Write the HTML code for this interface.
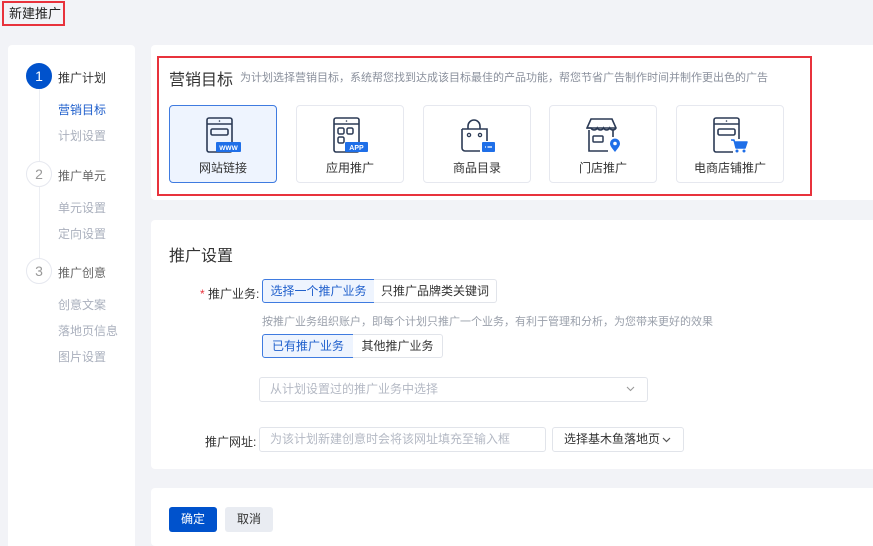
<!DOCTYPE html>
<html><head><meta charset="utf-8"><style>
*{box-sizing:border-box;margin:0;padding:0}
body{width:873px;height:546px;overflow:hidden;background:#f2f3f7;font-family:"Liberation Sans","Noto Sans CJK SC",sans-serif;position:relative;color:#333;font-size:12px}
.abs{position:absolute}
.title{left:2px;top:1px;width:63px;height:25px;border:2px solid #e8323c;font-size:13px;line-height:21px;padding-left:5px;color:#222}
.side{left:8px;top:45px;width:127px;height:501px;background:#fff;border-radius:4px 4px 0 0}
.step{position:absolute;left:18px;width:26px;height:26px;border-radius:50%;border:1px solid #e6e8ef;color:#999;text-align:center;line-height:24px;font-size:14px;background:#fff}
.step.on{background:#0052cc;border-color:#0052cc;color:#fff}
.sl{position:absolute;left:50px;font-size:12px;color:#333}
.si{position:absolute;left:50px;font-size:12px;color:#aab0bd}
.vline{position:absolute;left:31px;width:1px;background:#eceef3}
.card{left:151px;width:722px;background:#fff;border-radius:4px 0 0 4px}
.red{left:157px;top:56px;width:655px;height:140px;border:2px solid #e8323c}
.h1{font-size:16px;color:#333}
.opt{position:absolute;top:105px;width:108px;height:78px;border:1px solid #e6e8ef;border-radius:4px;background:#fff;text-align:center}
.opt.on{border-color:#3f7be0;background:#eef4fe}
.opt svg{position:absolute;left:36px;top:11px}
.opt span{position:absolute;left:0;right:0;top:53px;font-size:12px;color:#333}
.btn{position:absolute;height:24px;border:1px solid #e1e4ea;font-size:12px;line-height:22px;text-align:center;color:#333;background:#fff}
.btn.on{border-color:#3f7be0;background:#eef4fe;color:#1f5fcc}
.inp{position:absolute;height:25px;border:1px solid #e1e4ea;border-radius:3px;font-size:12px;line-height:23px;padding-left:10px;color:#b4b9c4}
.chev{position:absolute;top:8px}
</style></head><body>
<div class="abs title">新建推广</div>

<div class="abs side">
  <div class="vline" style="top:44px;height:80px"></div>
  <div class="vline" style="top:142px;height:80px"></div>
  <div class="step on" style="top:18px">1</div>
  <div class="sl" style="top:24px">推广计划</div>
  <div class="si" style="top:56px;color:#1f5fcc">营销目标</div>
  <div class="si" style="top:82px">计划设置</div>
  <div class="step" style="top:116px">2</div>
  <div class="sl" style="top:122px;color:#666">推广单元</div>
  <div class="si" style="top:154px">单元设置</div>
  <div class="si" style="top:180px">定向设置</div>
  <div class="step" style="top:213px">3</div>
  <div class="sl" style="top:219px;color:#666">推广创意</div>
  <div class="si" style="top:251px">创意文案</div>
  <div class="si" style="top:277px">落地页信息</div>
  <div class="si" style="top:303px">图片设置</div>
</div>

<div class="abs card" style="top:45px;height:155px"></div>
<div class="abs red"></div>
<div class="abs h1" style="left:169px;top:66px">营销目标</div>
<div class="abs" style="left:240px;top:69px;font-size:11px;color:#8a909c">为计划选择营销目标，系统帮您找到达成该目标最佳的产品功能，帮您节省广告制作时间并制作更出色的广告</div>

<div class="opt on" style="left:169px"><svg width="36" height="36" viewBox="0 0 36 36"><rect x="1" y="1" width="25" height="34" rx="2" fill="none" stroke="#2b3a55" stroke-width="1.6"/><line x1="1" y1="7" x2="26" y2="7" stroke="#2b3a55" stroke-width="1.4"/><circle cx="13.5" cy="4" r=".8" fill="#2b3a55"/><rect x="5" y="12" width="17" height="6" rx="1.5" fill="none" stroke="#2b3a55" stroke-width="1.6"/><rect x="10" y="25" width="25" height="10" rx="1" fill="#1f6fe8"/><text x="22.5" y="33" font-size="6.5" font-weight="bold" fill="#fff" text-anchor="middle" font-family="Liberation Sans">WWW</text></svg><span>网站链接</span></div>
<div class="opt" style="left:296px"><svg width="36" height="36" viewBox="0 0 36 36"><rect x="1" y="1" width="25" height="34" rx="2" fill="none" stroke="#2b3a55" stroke-width="1.6"/><line x1="1" y1="7" x2="26" y2="7" stroke="#2b3a55" stroke-width="1.4"/><circle cx="13.5" cy="4" r=".8" fill="#2b3a55"/><rect x="5" y="11" width="6" height="6" rx="1.5" fill="none" stroke="#2b3a55" stroke-width="1.5"/><rect x="14" y="11" width="6" height="6" rx="1.5" fill="none" stroke="#2b3a55" stroke-width="1.5"/><rect x="5" y="20" width="6" height="6" rx="1.5" fill="none" stroke="#2b3a55" stroke-width="1.5"/><rect x="12" y="25" width="23" height="10" rx="1" fill="#1f6fe8"/><text x="23.5" y="33" font-size="7" font-weight="bold" fill="#fff" text-anchor="middle" font-family="Liberation Sans">APP</text></svg><span>应用推广</span></div>
<div class="opt" style="left:423px"><svg width="36" height="36" viewBox="0 0 36 36"><path d="M8 12 V9 a6 6 0 0 1 12 0 V12" fill="none" stroke="#2b3a55" stroke-width="1.6"/><path d="M2 12 H27 V24 M20 34 H5 a3 3 0 0 1 -3 -3 V12" fill="none" stroke="#2b3a55" stroke-width="1.6"/><circle cx="9" cy="18" r="1.6" fill="none" stroke="#2b3a55" stroke-width="1.3"/><circle cx="20" cy="18" r="1.6" fill="none" stroke="#2b3a55" stroke-width="1.3"/><rect x="22" y="25" width="13" height="10" rx="1" fill="#1f6fe8"/><line x1="25" y1="30" x2="26" y2="30" stroke="#fff" stroke-width="1.3"/><line x1="27.5" y1="30" x2="32" y2="30" stroke="#fff" stroke-width="1.3"/></svg><span>商品目录</span></div>
<div class="opt" style="left:549px"><svg width="36" height="36" viewBox="0 0 36 36"><path d="M4 2 H25 L29 11 a3.5 3.5 0 0 1 -6.25 0 a3.5 3.5 0 0 1 -6.25 0 a3.5 3.5 0 0 1 -6.25 0 a3.5 3.5 0 0 1 -6.25 0 L0 11 Z" fill="none" stroke="#2b3a55" stroke-width="1.6" transform="translate(1,0)"/><line x1="1" y1="11" x2="30" y2="11" stroke="#2b3a55" stroke-width="1.4"/><path d="M3 13 V34 H22 M27 13 V20" fill="none" stroke="#2b3a55" stroke-width="1.6"/><rect x="7" y="19" width="10" height="6" rx="1" fill="none" stroke="#2b3a55" stroke-width="1.5"/><path d="M29 35 C26 31 24 29 24 26.5 a5 5 0 0 1 10 0 C34 29 32 31 29 35Z" fill="#1f6fe8"/><circle cx="29" cy="26.5" r="1.8" fill="#fff"/></svg><span>门店推广</span></div>
<div class="opt" style="left:676px"><svg width="36" height="36" viewBox="0 0 36 36"><path d="M20 35 H3 a2 2 0 0 1 -2 -2 V3 a2 2 0 0 1 2 -2 H24 a2 2 0 0 1 2 2 V22" fill="none" stroke="#2b3a55" stroke-width="1.6"/><line x1="1" y1="7" x2="26" y2="7" stroke="#2b3a55" stroke-width="1.4"/><circle cx="13.5" cy="4" r=".8" fill="#2b3a55"/><rect x="5" y="12" width="17" height="6" rx="1.5" fill="none" stroke="#2b3a55" stroke-width="1.6"/><path d="M18 23 H21 L23 31 H32 L34 25 H22" fill="#1f6fe8" stroke="#1f6fe8" stroke-width="1.5" stroke-linejoin="round"/><circle cx="24" cy="34" r="1.5" fill="#1f6fe8"/><circle cx="31" cy="34" r="1.5" fill="#1f6fe8"/></svg><span>电商店铺推广</span></div>

<div class="abs card" style="top:220px;height:249px"></div>
<div class="abs h1" style="left:169px;top:242px">推广设置</div>
<div class="abs" style="left:200px;top:285px;color:#333"><span style="color:#e8323c">* </span>推广业务:</div>
<div class="btn on" style="left:262px;top:279px;width:113px;border-radius:3px 0 0 3px">选择一个推广业务</div>
<div class="btn" style="left:374px;top:279px;width:123px;border-radius:0 3px 3px 0;border-left:none">只推广品牌类关键词</div>
<div class="abs" style="left:262px;top:313px;color:#9aa0ab;font-size:11px">按推广业务组织账户，即每个计划只推广一个业务，有利于管理和分析，为您带来更好的效果</div>
<div class="btn on" style="left:262px;top:334px;width:92px;border-radius:3px 0 0 3px">已有推广业务</div>
<div class="btn" style="left:353px;top:334px;width:90px;border-radius:0 3px 3px 0;border-left:none">其他推广业务</div>
<div class="inp" style="left:259px;top:377px;width:389px">从计划设置过的推广业务中选择<svg class="chev" style="right:12px" width="9" height="6" viewBox="0 0 9 6"><path d="M1 1 L4.5 4.5 L8 1" fill="none" stroke="#999" stroke-width="1.1"/></svg></div>
<div class="abs" style="left:205px;top:433px;color:#333">推广网址:</div>
<div class="inp" style="left:259px;top:427px;width:287px">为该计划新建创意时会将该网址填充至输入框</div>
<div class="inp" style="left:552px;top:427px;width:132px;color:#333;font-size:12px;padding-left:11px">选择基木鱼落地页<svg class="chev" style="right:12px;top:9px" width="9" height="6" viewBox="0 0 9 6"><path d="M1 1 L4.5 4.5 L8 1" fill="none" stroke="#555" stroke-width="1.2"/></svg></div>

<div class="abs card" style="top:488px;height:58px"></div>
<div class="btn" style="left:169px;top:507px;width:48px;border:none;border-radius:3px;background:#0052cc;color:#fff;line-height:25px;height:25px">确定</div>
<div class="btn" style="left:225px;top:507px;width:48px;border:none;border-radius:3px;background:#e9ecf2;line-height:25px;height:25px">取消</div>
</body></html>
